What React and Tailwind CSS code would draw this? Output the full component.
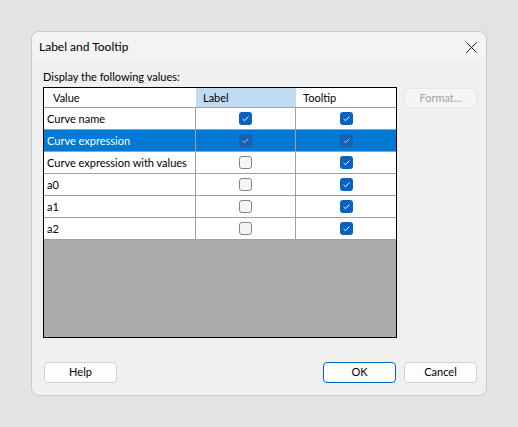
import React from "react";

const font = { fontFamily: 'Lato, "Noto Sans", Arial, sans-serif' };

function Check({ checked, selected }) {
  if (!checked) {
    return (
      <svg width="13" height="13" viewBox="0 0 13 13">
        <rect x="0.5" y="0.5" width="12" height="12" rx="2.5" fill="#f5f5f5" stroke="#858585" />
      </svg>
    );
  }
  return (
    <svg width="13" height="13" viewBox="0 0 13 13">
      <rect x="0" y="0" width="13" height="13" rx="3" fill={selected ? "#1760b3" : "#0a62bf"} />
      <path d="M3.6 6.9 L5.5 8.7 L9.4 4.6" fill="none" stroke={selected ? "#a9c6e8" : "#ffffff"} strokeWidth="1" />
    </svg>
  );
}

const rows = [
  { name: "Curve name", label: true, tip: true },
  { name: "Curve expression", label: true, tip: true, sel: true },
  { name: "Curve expression with values", label: false, tip: true },
  { name: "a0", label: false, tip: true },
  { name: "a1", label: false, tip: true },
  { name: "a2", label: false, tip: true },
];

export default function App() {
  return (
    <div className="w-[518px] h-[427px] bg-[#e3e3e3] pt-[31px] pl-[31px] text-[11px] text-black" style={font}>
      <div className="w-[456px] h-[365px] border border-[#c9c9c9] rounded-[8px] bg-[#f0f0f0] flex flex-col overflow-hidden">
        <div className="h-[29px] bg-[#f3f3f3] flex items-center justify-between pl-[7px] pr-[9px]">
          <span className="text-[12px] leading-[16px] pt-[1px]">Label and Tooltip</span>
          <svg width="11" height="11" viewBox="0 0 11 11" className="mt-[1px]">
            <path d="M0.5 0.5 L10.5 10.5 M10.5 0.5 L0.5 10.5" stroke="#1a1a1a" strokeWidth="1" />
          </svg>
        </div>
        <div className="flex flex-col pl-[11px] pr-[9px] pt-[8px]">
          <div className="leading-[16px] h-[16px] text-[#000]">Display the following values:</div>
          <div className="flex gap-[7px] mt-[2px]">
            <div className="w-[354px] h-[251px] border border-black bg-[#ababab] flex flex-col">
              <div className="flex h-[20px] bg-white border-b border-[#a0a0a0] leading-[19px]">
                <div className="w-[152px] pl-[9px]">Value</div>
                <div className="w-[100px] bg-[#c0dcf3] pl-[7px]">Label</div>
                <div className="w-[100px] pl-[7px]">Tooltip</div>
              </div>
              {rows.map((r) => (
                <div
                  key={r.name}
                  className={
                    "flex h-[22px] border-b border-[#a0a0a0] leading-[21px] " +
                    (r.sel ? "bg-[#0078d4] text-white" : "bg-white text-black")
                  }
                >
                  <div className="w-[152px] pl-[3px] border-r border-[#a0a0a0] whitespace-nowrap">{r.name}</div>
                  <div className="w-[100px] border-r border-[#a0a0a0] flex items-center justify-center">
                    <Check checked={r.label} selected={r.sel} />
                  </div>
                  <div className="w-[100px] flex items-center justify-center">
                    <Check checked={r.tip} selected={r.sel} />
                  </div>
                </div>
              ))}
            </div>
            <div className="mt-[1px] w-[73px] h-[20px] rounded-[4px] border border-[#e6e6e6] bg-[#f5f5f5] text-[#a2a2a2] flex items-center justify-center">
              Format...
            </div>
          </div>
          <div className="flex mt-[24px] pl-[1px]">
            <button className="w-[73px] h-[21px] rounded-[4px] border border-[#d0d0d0] bg-[#fdfdfd] flex items-center justify-center">
              Help
            </button>
            <div className="flex-1" />
            <button className="w-[73px] h-[21px] rounded-[4px] border border-[#0067c0] bg-[#fdfdfd] flex items-center justify-center">
              OK
            </button>
            <button className="ml-[8px] w-[73px] h-[21px] rounded-[4px] border border-[#d0d0d0] bg-[#fdfdfd] flex items-center justify-center">
              Cancel
            </button>
          </div>
        </div>
      </div>
    </div>
  );
}
